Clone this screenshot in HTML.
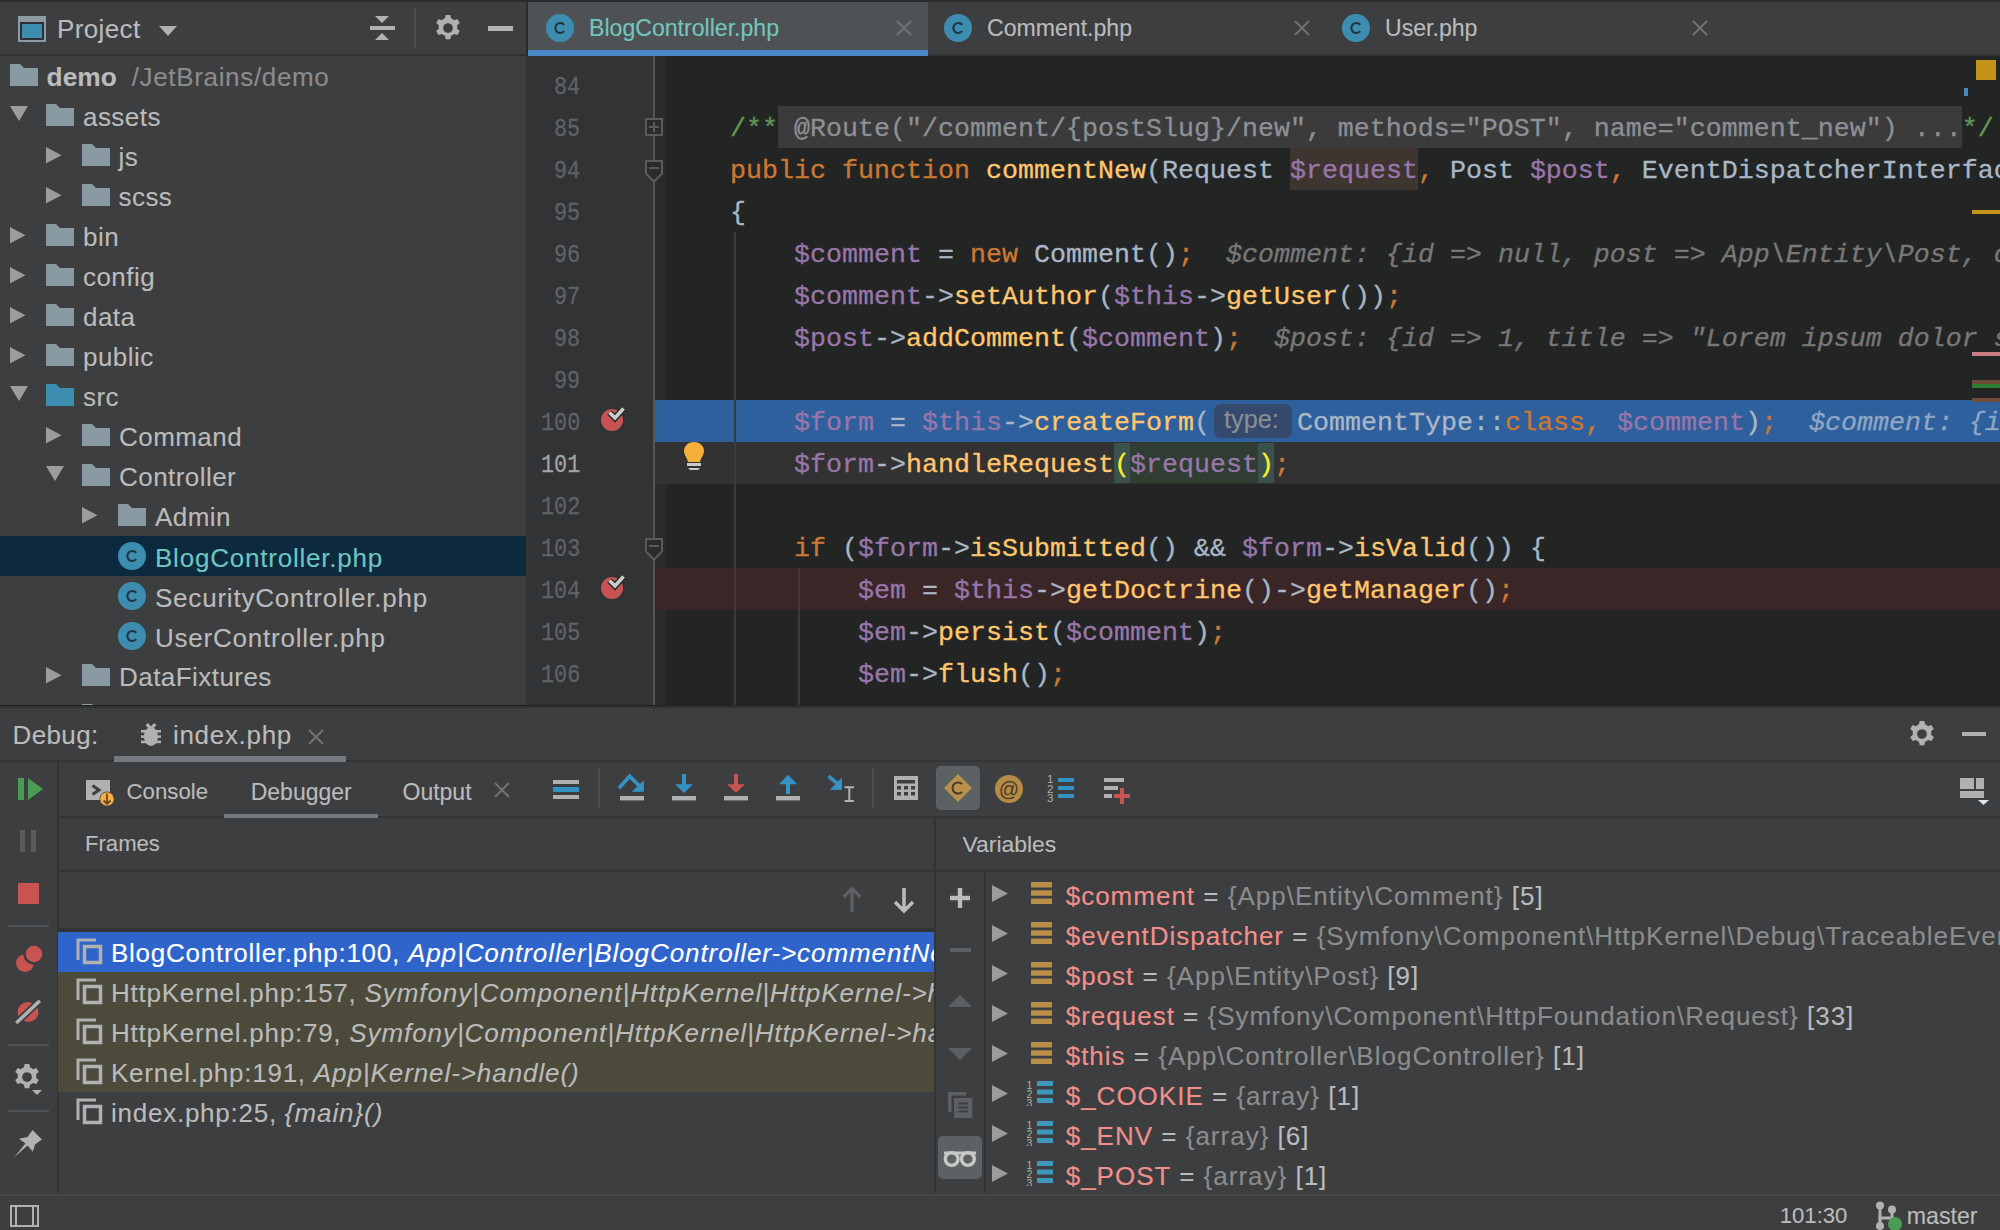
<!DOCTYPE html><html><head><meta charset="utf-8"><style>
html,body{margin:0;padding:0;width:2000px;height:1230px;overflow:hidden;background:#3C3E40}
body{position:relative}
.t{position:absolute;height:0;line-height:0;white-space:pre;-webkit-text-stroke:0.12px currentColor}
</style></head><body>
<div style="position:absolute;left:0px;top:0px;width:2000px;height:1230px;background:#3C3E40;"></div>
<div style="position:absolute;left:0px;top:0px;width:2000px;height:2px;background:#2B2B2B;"></div>
<div style="position:absolute;left:526px;top:0px;width:2px;height:56px;background:#2B2B2B;"></div>
<svg style="position:absolute;left:17px;top:15px" width="30" height="28" viewBox="0 0 30 28"><rect x="1" y="1" width="28" height="26" fill="#8D9BA3"/><rect x="3" y="7" width="24" height="18" fill="#2E3033"/><rect x="5" y="9" width="20" height="14" fill="#3D8DB1"/></svg>
<div class="t" style="left:57px;top:29.49px;font-family:'Liberation Sans', sans-serif;font-size:26px;color:#BBBBBB;letter-spacing:0.37px">Project</div>
<svg style="position:absolute;left:158px;top:25px" width="20" height="12" viewBox="0 0 20 12"><path d="M1 1 L19 1 L10 11 Z" fill="#AFB1B3"/></svg>
<svg style="position:absolute;left:369px;top:15px" width="27" height="27" viewBox="0 0 27 27"><path d="M6 1 H20 L13 8 Z" fill="#AFB1B3"/><rect x="1" y="11" width="25" height="4" fill="#AFB1B3"/><path d="M6 25 H20 L13 18 Z" fill="#AFB1B3"/></svg>
<div style="position:absolute;left:414px;top:8px;width:2px;height:40px;background:#4A4D4F;"></div>
<svg style="position:absolute;left:435px;top:15px" width="26" height="26" viewBox="0 0 26 26"><g transform="translate(13,13) scale(1.05)"><path fill="#AFB1B3" fill-rule="evenodd" d="M-2.2,-12.5 h4.4 l0.7,3.3 a9,9 0 0 1 2.9,1.7 l3.2,-1.1 l2.2,3.8 l-2.5,2.2 a9,9 0 0 1 0,3.3 l2.5,2.2 l-2.2,3.8 l-3.2,-1.1 a9,9 0 0 1 -2.9,1.7 l-0.7,3.3 h-4.4 l-0.7,-3.3 a9,9 0 0 1 -2.9,-1.7 l-3.2,1.1 l-2.2,-3.8 l2.5,-2.2 a9,9 0 0 1 0,-3.3 l-2.5,-2.2 l2.2,-3.8 l3.2,1.1 a9,9 0 0 1 2.9,-1.7 Z M0,-4.6 a4.6,4.6 0 1 0 0.01,0 Z"/></g></svg>
<div style="position:absolute;left:488px;top:26px;width:25px;height:4.5px;background:#AFB1B3;"></div>
<div style="position:absolute;left:0px;top:54px;width:526px;height:2px;background:#2F3133;"></div>
<div style="position:absolute;left:0;top:56px;width:526px;height:650px;overflow:hidden">
<svg style="position:absolute;left:10px;top:8px" width="28" height="22" viewBox="0 0 28 22"><path d="M0 0 H10 L14 4 H28 V22 H0 Z" fill="#8A9AA3"/></svg>
<div class="t" style="left:46.6px;top:20.89px;font-family:'Liberation Sans', sans-serif;font-size:26.3px;color:#BBBBBB;font-weight:bold">demo</div>
<div class="t" style="left:131.7px;top:20.99px;font-family:'Liberation Sans', sans-serif;font-size:26px;color:#8C8C8C;letter-spacing:0.66px">/JetBrains/demo</div>
<div style="position:absolute;left:0px;top:480px;width:526px;height:40px;background:#0D293E;"></div>
<svg style="position:absolute;left:10px;top:50px" width="18" height="15" viewBox="0 0 18 15"><path d="M0 0 H18 L9 15 Z" fill="#9A9C9E"/></svg>
<svg style="position:absolute;left:46px;top:48px" width="28" height="22" viewBox="0 0 28 22"><path d="M0 0 H10 L14 4 H28 V22 H0 Z" fill="#8A9AA3"/></svg>
<div class="t" style="left:83px;top:60.99px;font-family:'Liberation Sans', sans-serif;font-size:26px;color:#BBBBBB;letter-spacing:0.45px">assets</div>
<svg style="position:absolute;left:46px;top:91px" width="16" height="17" viewBox="0 0 16 17"><path d="M0 0 L15.5 8.3 L0 16.6 Z" fill="#9A9C9E"/></svg>
<svg style="position:absolute;left:82px;top:88px" width="28" height="22" viewBox="0 0 28 22"><path d="M0 0 H10 L14 4 H28 V22 H0 Z" fill="#8A9AA3"/></svg>
<div class="t" style="left:118.5px;top:100.99px;font-family:'Liberation Sans', sans-serif;font-size:26px;color:#BBBBBB;letter-spacing:0.45px">js</div>
<svg style="position:absolute;left:46px;top:131px" width="16" height="17" viewBox="0 0 16 17"><path d="M0 0 L15.5 8.3 L0 16.6 Z" fill="#9A9C9E"/></svg>
<svg style="position:absolute;left:82px;top:128px" width="28" height="22" viewBox="0 0 28 22"><path d="M0 0 H10 L14 4 H28 V22 H0 Z" fill="#8A9AA3"/></svg>
<div class="t" style="left:118.5px;top:140.99px;font-family:'Liberation Sans', sans-serif;font-size:26px;color:#BBBBBB;letter-spacing:0.45px">scss</div>
<svg style="position:absolute;left:10px;top:171px" width="16" height="17" viewBox="0 0 16 17"><path d="M0 0 L15.5 8.3 L0 16.6 Z" fill="#9A9C9E"/></svg>
<svg style="position:absolute;left:46px;top:168px" width="28" height="22" viewBox="0 0 28 22"><path d="M0 0 H10 L14 4 H28 V22 H0 Z" fill="#8A9AA3"/></svg>
<div class="t" style="left:83px;top:180.99px;font-family:'Liberation Sans', sans-serif;font-size:26px;color:#BBBBBB;letter-spacing:0.45px">bin</div>
<svg style="position:absolute;left:10px;top:211px" width="16" height="17" viewBox="0 0 16 17"><path d="M0 0 L15.5 8.3 L0 16.6 Z" fill="#9A9C9E"/></svg>
<svg style="position:absolute;left:46px;top:208px" width="28" height="22" viewBox="0 0 28 22"><path d="M0 0 H10 L14 4 H28 V22 H0 Z" fill="#8A9AA3"/></svg>
<div class="t" style="left:83px;top:220.99px;font-family:'Liberation Sans', sans-serif;font-size:26px;color:#BBBBBB;letter-spacing:0.45px">config</div>
<svg style="position:absolute;left:10px;top:251px" width="16" height="17" viewBox="0 0 16 17"><path d="M0 0 L15.5 8.3 L0 16.6 Z" fill="#9A9C9E"/></svg>
<svg style="position:absolute;left:46px;top:248px" width="28" height="22" viewBox="0 0 28 22"><path d="M0 0 H10 L14 4 H28 V22 H0 Z" fill="#8A9AA3"/></svg>
<div class="t" style="left:83px;top:260.99px;font-family:'Liberation Sans', sans-serif;font-size:26px;color:#BBBBBB;letter-spacing:0.45px">data</div>
<svg style="position:absolute;left:10px;top:291px" width="16" height="17" viewBox="0 0 16 17"><path d="M0 0 L15.5 8.3 L0 16.6 Z" fill="#9A9C9E"/></svg>
<svg style="position:absolute;left:46px;top:288px" width="28" height="22" viewBox="0 0 28 22"><path d="M0 0 H10 L14 4 H28 V22 H0 Z" fill="#8A9AA3"/></svg>
<div class="t" style="left:83px;top:300.99px;font-family:'Liberation Sans', sans-serif;font-size:26px;color:#BBBBBB;letter-spacing:0.45px">public</div>
<svg style="position:absolute;left:10px;top:330px" width="18" height="15" viewBox="0 0 18 15"><path d="M0 0 H18 L9 15 Z" fill="#9A9C9E"/></svg>
<svg style="position:absolute;left:46px;top:328px" width="28" height="22" viewBox="0 0 28 22"><path d="M0 0 H10 L14 4 H28 V22 H0 Z" fill="#3D8DB1"/></svg>
<div class="t" style="left:83px;top:340.99px;font-family:'Liberation Sans', sans-serif;font-size:26px;color:#BBBBBB;letter-spacing:0.45px">src</div>
<svg style="position:absolute;left:46px;top:371px" width="16" height="17" viewBox="0 0 16 17"><path d="M0 0 L15.5 8.3 L0 16.6 Z" fill="#9A9C9E"/></svg>
<svg style="position:absolute;left:82px;top:368px" width="28" height="22" viewBox="0 0 28 22"><path d="M0 0 H10 L14 4 H28 V22 H0 Z" fill="#8A9AA3"/></svg>
<div class="t" style="left:119px;top:380.99px;font-family:'Liberation Sans', sans-serif;font-size:26px;color:#BBBBBB;letter-spacing:0.45px">Command</div>
<svg style="position:absolute;left:46px;top:410px" width="18" height="15" viewBox="0 0 18 15"><path d="M0 0 H18 L9 15 Z" fill="#9A9C9E"/></svg>
<svg style="position:absolute;left:82px;top:408px" width="28" height="22" viewBox="0 0 28 22"><path d="M0 0 H10 L14 4 H28 V22 H0 Z" fill="#8A9AA3"/></svg>
<div class="t" style="left:119px;top:420.99px;font-family:'Liberation Sans', sans-serif;font-size:26px;color:#BBBBBB;letter-spacing:0.45px">Controller</div>
<svg style="position:absolute;left:82px;top:451px" width="16" height="17" viewBox="0 0 16 17"><path d="M0 0 L15.5 8.3 L0 16.6 Z" fill="#9A9C9E"/></svg>
<svg style="position:absolute;left:118px;top:448px" width="28" height="22" viewBox="0 0 28 22"><path d="M0 0 H10 L14 4 H28 V22 H0 Z" fill="#8A9AA3"/></svg>
<div class="t" style="left:155px;top:460.99px;font-family:'Liberation Sans', sans-serif;font-size:26px;color:#BBBBBB;letter-spacing:0.45px">Admin</div>
<svg style="position:absolute;left:46px;top:611px" width="16" height="17" viewBox="0 0 16 17"><path d="M0 0 L15.5 8.3 L0 16.6 Z" fill="#9A9C9E"/></svg>
<svg style="position:absolute;left:82px;top:608px" width="28" height="22" viewBox="0 0 28 22"><path d="M0 0 H10 L14 4 H28 V22 H0 Z" fill="#8A9AA3"/></svg>
<div class="t" style="left:119px;top:620.99px;font-family:'Liberation Sans', sans-serif;font-size:26px;color:#BBBBBB;letter-spacing:0.45px">DataFixtures</div>
<svg style="position:absolute;left:46px;top:651px" width="16" height="17" viewBox="0 0 16 17"><path d="M0 0 L15.5 8.3 L0 16.6 Z" fill="#9A9C9E"/></svg>
<svg style="position:absolute;left:82px;top:648px" width="28" height="22" viewBox="0 0 28 22"><path d="M0 0 H10 L14 4 H28 V22 H0 Z" fill="#8A9AA3"/></svg>
<div class="t" style="left:119px;top:660.99px;font-family:'Liberation Sans', sans-serif;font-size:26px;color:#BBBBBB;letter-spacing:0.45px">Entity</div>
<svg style="position:absolute;left:118.0px;top:486.0px" width="28" height="28" viewBox="0 0 28 28"><circle cx="14.0" cy="14.0" r="14.0" fill="#3D8DB1"/><path d="M18.2 10.8 A5 5 0 1 0 18.2 17.2" stroke="#1E3440" stroke-width="2.1" fill="none"/></svg>
<div class="t" style="left:155px;top:501.99px;font-family:'Liberation Sans', sans-serif;font-size:26px;color:#6FC4C0;letter-spacing:0.78px">BlogController.php</div>
<svg style="position:absolute;left:118.0px;top:526.0px" width="28" height="28" viewBox="0 0 28 28"><circle cx="14.0" cy="14.0" r="14.0" fill="#3D8DB1"/><path d="M18.2 10.8 A5 5 0 1 0 18.2 17.2" stroke="#1E3440" stroke-width="2.1" fill="none"/></svg>
<div class="t" style="left:155px;top:541.99px;font-family:'Liberation Sans', sans-serif;font-size:26px;color:#BBBBBB;letter-spacing:0.78px">SecurityController.php</div>
<svg style="position:absolute;left:118.0px;top:566.0px" width="28" height="28" viewBox="0 0 28 28"><circle cx="14.0" cy="14.0" r="14.0" fill="#3D8DB1"/><path d="M18.2 10.8 A5 5 0 1 0 18.2 17.2" stroke="#1E3440" stroke-width="2.1" fill="none"/></svg>
<div class="t" style="left:155px;top:581.99px;font-family:'Liberation Sans', sans-serif;font-size:26px;color:#BBBBBB;letter-spacing:0.78px">UserController.php</div>
</div>
<div style="position:absolute;left:528px;top:2px;width:400px;height:48px;background:#4E5254;"></div>
<div style="position:absolute;left:528px;top:50px;width:400px;height:6px;background:#4A88C7;"></div>
<div style="position:absolute;left:928px;top:54px;width:1072px;height:2px;background:#323234;"></div>
<svg style="position:absolute;left:546.0px;top:14.0px" width="28" height="28" viewBox="0 0 28 28"><circle cx="14.0" cy="14.0" r="14.0" fill="#3D8DB1"/><path d="M18.2 10.8 A5 5 0 1 0 18.2 17.2" stroke="#1E3440" stroke-width="2.1" fill="none"/></svg>
<div class="t" style="left:589px;top:28.00px;font-family:'Liberation Sans', sans-serif;font-size:23.1px;color:#73C6BE;">BlogController.php</div>
<svg style="position:absolute;left:896px;top:20px" width="16" height="16" viewBox="0 0 16 16"><path d="M1 1 L15 15 M15 1 L1 15" stroke="#707274" stroke-width="2"/></svg>
<svg style="position:absolute;left:944.0px;top:14.0px" width="28" height="28" viewBox="0 0 28 28"><circle cx="14.0" cy="14.0" r="14.0" fill="#3D8DB1"/><path d="M18.2 10.8 A5 5 0 1 0 18.2 17.2" stroke="#1E3440" stroke-width="2.1" fill="none"/></svg>
<div class="t" style="left:987px;top:28.00px;font-family:'Liberation Sans', sans-serif;font-size:23.1px;color:#BBBBBB;">Comment.php</div>
<svg style="position:absolute;left:1294px;top:20px" width="16" height="16" viewBox="0 0 16 16"><path d="M1 1 L15 15 M15 1 L1 15" stroke="#707274" stroke-width="2"/></svg>
<svg style="position:absolute;left:1342.0px;top:14.0px" width="28" height="28" viewBox="0 0 28 28"><circle cx="14.0" cy="14.0" r="14.0" fill="#3D8DB1"/><path d="M18.2 10.8 A5 5 0 1 0 18.2 17.2" stroke="#1E3440" stroke-width="2.1" fill="none"/></svg>
<div class="t" style="left:1385px;top:28.00px;font-family:'Liberation Sans', sans-serif;font-size:23.1px;color:#BBBBBB;">User.php</div>
<svg style="position:absolute;left:1692px;top:20px" width="16" height="16" viewBox="0 0 16 16"><path d="M1 1 L15 15 M15 1 L1 15" stroke="#707274" stroke-width="2"/></svg>
<div style="position:absolute;left:528px;top:56px;width:1472px;height:650px;background:#232525;"></div>
<div style="position:absolute;left:526px;top:56px;width:127px;height:650px;background:#313335;"></div>
<div style="position:absolute;left:653px;top:56px;width:2px;height:650px;background:#555555;"></div>
<div style="position:absolute;left:655px;top:56px;width:11px;height:650px;background:#2B2B2B;"></div>
<div style="position:absolute;left:655px;top:400px;width:1345px;height:42px;background:#2E609D;"></div>
<div style="position:absolute;left:655px;top:442px;width:1345px;height:42px;background:#323232;"></div>
<div style="position:absolute;left:655px;top:568px;width:1345px;height:42px;background:#3A2627;"></div>
<div style="position:absolute;left:734px;top:232px;width:2px;height:474px;background:#3B3B3B;"></div>
<div style="position:absolute;left:798px;top:568px;width:2px;height:138px;background:#3B3B3B;"></div>
<div class="t" style="left:553.86px;top:87.08px;font-family:'Liberation Mono', monospace;font-size:26px;-webkit-text-stroke:0.3px currentColor;color:#606366;transform:scaleX(0.838);transform-origin:0 0">84</div>
<div class="t" style="left:553.86px;top:129.08px;font-family:'Liberation Mono', monospace;font-size:26px;-webkit-text-stroke:0.3px currentColor;color:#606366;transform:scaleX(0.838);transform-origin:0 0">85</div>
<div class="t" style="left:553.86px;top:171.08px;font-family:'Liberation Mono', monospace;font-size:26px;-webkit-text-stroke:0.3px currentColor;color:#606366;transform:scaleX(0.838);transform-origin:0 0">94</div>
<div class="t" style="left:553.86px;top:213.08px;font-family:'Liberation Mono', monospace;font-size:26px;-webkit-text-stroke:0.3px currentColor;color:#606366;transform:scaleX(0.838);transform-origin:0 0">95</div>
<div class="t" style="left:553.86px;top:255.08px;font-family:'Liberation Mono', monospace;font-size:26px;-webkit-text-stroke:0.3px currentColor;color:#606366;transform:scaleX(0.838);transform-origin:0 0">96</div>
<div class="t" style="left:553.86px;top:297.08px;font-family:'Liberation Mono', monospace;font-size:26px;-webkit-text-stroke:0.3px currentColor;color:#606366;transform:scaleX(0.838);transform-origin:0 0">97</div>
<div class="t" style="left:553.86px;top:339.08px;font-family:'Liberation Mono', monospace;font-size:26px;-webkit-text-stroke:0.3px currentColor;color:#606366;transform:scaleX(0.838);transform-origin:0 0">98</div>
<div class="t" style="left:553.86px;top:381.08px;font-family:'Liberation Mono', monospace;font-size:26px;-webkit-text-stroke:0.3px currentColor;color:#606366;transform:scaleX(0.838);transform-origin:0 0">99</div>
<div class="t" style="left:540.79px;top:423.08px;font-family:'Liberation Mono', monospace;font-size:26px;-webkit-text-stroke:0.3px currentColor;color:#606366;transform:scaleX(0.838);transform-origin:0 0">100</div>
<div class="t" style="left:540.79px;top:465.08px;font-family:'Liberation Mono', monospace;font-size:26px;-webkit-text-stroke:0.3px currentColor;color:#A4A3A3;transform:scaleX(0.838);transform-origin:0 0">101</div>
<div class="t" style="left:540.79px;top:507.08px;font-family:'Liberation Mono', monospace;font-size:26px;-webkit-text-stroke:0.3px currentColor;color:#606366;transform:scaleX(0.838);transform-origin:0 0">102</div>
<div class="t" style="left:540.79px;top:549.08px;font-family:'Liberation Mono', monospace;font-size:26px;-webkit-text-stroke:0.3px currentColor;color:#606366;transform:scaleX(0.838);transform-origin:0 0">103</div>
<div class="t" style="left:540.79px;top:591.08px;font-family:'Liberation Mono', monospace;font-size:26px;-webkit-text-stroke:0.3px currentColor;color:#606366;transform:scaleX(0.838);transform-origin:0 0">104</div>
<div class="t" style="left:540.79px;top:633.08px;font-family:'Liberation Mono', monospace;font-size:26px;-webkit-text-stroke:0.3px currentColor;color:#606366;transform:scaleX(0.838);transform-origin:0 0">105</div>
<div class="t" style="left:540.79px;top:675.08px;font-family:'Liberation Mono', monospace;font-size:26px;-webkit-text-stroke:0.3px currentColor;color:#606366;transform:scaleX(0.838);transform-origin:0 0">106</div>
<div style="position:absolute;left:778px;top:106px;width:1184px;height:42px;background:#3B3B3B;"></div>
<div class="t" style="left:730.0px;top:128.90px;font-family:'Liberation Mono', monospace;font-size:26.67px;-webkit-text-stroke:0.3px currentColor"><span style="color:#629755;">/**</span><span style="color:#8C9096;"> @Route(&quot;/comment/{postSlug}/new&quot;, methods=&quot;POST&quot;, name=&quot;comment_new&quot;) ...</span><span style="color:#629755;">*/</span></div>
<div style="position:absolute;left:1290px;top:148px;width:128px;height:42px;background:#3F3530;"></div>
<div class="t" style="left:730.0px;top:170.90px;font-family:'Liberation Mono', monospace;font-size:26.67px;-webkit-text-stroke:0.3px currentColor"><span style="color:#CC7832;">public</span><span style="color:#A9B7C6;"> </span><span style="color:#CC7832;">function</span><span style="color:#A9B7C6;"> </span><span style="color:#FFC66D;">commentNew</span><span style="color:#A9B7C6;">(Request </span><span style="color:#9876AA;">$request</span><span style="color:#CC7832;">,</span><span style="color:#A9B7C6;"> Post </span><span style="color:#9876AA;">$post</span><span style="color:#CC7832;">,</span><span style="color:#A9B7C6;"> EventDispatcherInterface $eventDispatcher</span></div>
<div class="t" style="left:730.0px;top:212.90px;font-family:'Liberation Mono', monospace;font-size:26.67px;-webkit-text-stroke:0.3px currentColor"><span style="color:#A9B7C6;">{</span></div>
<div class="t" style="left:794.0px;top:254.90px;font-family:'Liberation Mono', monospace;font-size:26.67px;-webkit-text-stroke:0.3px currentColor"><span style="color:#9876AA;">$comment</span><span style="color:#A9B7C6;"> = </span><span style="color:#CC7832;">new</span><span style="color:#A9B7C6;"> Comment()</span><span style="color:#CC7832;">;</span><span style="color:#787878;font-style:italic">  $comment: {id =&gt; null, post =&gt; App\Entity\Post, content =&gt; null}</span></div>
<div class="t" style="left:794.0px;top:296.90px;font-family:'Liberation Mono', monospace;font-size:26.67px;-webkit-text-stroke:0.3px currentColor"><span style="color:#9876AA;">$comment</span><span style="color:#A9B7C6;">-&gt;</span><span style="color:#FFC66D;">setAuthor</span><span style="color:#A9B7C6;">(</span><span style="color:#9876AA;">$this</span><span style="color:#A9B7C6;">-&gt;</span><span style="color:#FFC66D;">getUser</span><span style="color:#A9B7C6;">())</span><span style="color:#CC7832;">;</span></div>
<div class="t" style="left:794.0px;top:338.90px;font-family:'Liberation Mono', monospace;font-size:26.67px;-webkit-text-stroke:0.3px currentColor"><span style="color:#9876AA;">$post</span><span style="color:#A9B7C6;">-&gt;</span><span style="color:#FFC66D;">addComment</span><span style="color:#A9B7C6;">(</span><span style="color:#9876AA;">$comment</span><span style="color:#A9B7C6;">)</span><span style="color:#CC7832;">;</span><span style="color:#787878;font-style:italic">  $post: {id =&gt; 1, title =&gt; &quot;Lorem ipsum dolor sit amet&quot;}</span></div>
<div class="t" style="left:794.0px;top:422.90px;font-family:'Liberation Mono', monospace;font-size:26.67px;-webkit-text-stroke:0.3px currentColor"><span style="color:#9876AA;">$form</span><span style="color:#A9B7C6;"> = </span><span style="color:#9876AA;">$this</span><span style="color:#A9B7C6;">-&gt;</span><span style="color:#FFC66D;">createForm</span><span style="color:#A9B7C6;">(</span></div>
<div style="position:absolute;left:1214px;top:404px;width:78px;height:34px;background:#34496B;border-radius:7px"></div>
<div class="t" style="left:1224px;top:419.23px;font-family:'Liberation Sans', sans-serif;font-size:25.3px;color:#8A8F96;">type:</div>
<div class="t" style="left:1297px;top:422.90px;font-family:'Liberation Mono', monospace;font-size:26.67px;-webkit-text-stroke:0.3px currentColor"><span style="color:#A9B7C6">CommentType::</span><span style="color:#CC7832">class</span><span style="color:#CC7832">,</span><span style="color:#A9B7C6"> </span><span style="color:#9876AA">$comment</span><span style="color:#A9B7C6">)</span><span style="color:#CC7832">;</span><span style="color:#8FA6C4;font-style:italic">  $comment: {id => null}</span></div>
<div style="position:absolute;left:1114px;top:443px;width:160px;height:40px;background:#2F3D33;"></div>
<div style="position:absolute;left:1114px;top:443px;width:16px;height:40px;background:#3B514D;"></div>
<div style="position:absolute;left:1258px;top:443px;width:16px;height:40px;background:#3B514D;"></div>
<div class="t" style="left:794.0px;top:464.90px;font-family:'Liberation Mono', monospace;font-size:26.67px;-webkit-text-stroke:0.3px currentColor"><span style="color:#9876AA;">$form</span><span style="color:#A9B7C6;">-&gt;</span><span style="color:#FFC66D;">handleRequest</span><span style="color:#FFEF28;">(</span><span style="color:#9876AA;">$request</span><span style="color:#FFEF28;">)</span><span style="color:#CC7832;">;</span></div>
<div class="t" style="left:794.0px;top:548.90px;font-family:'Liberation Mono', monospace;font-size:26.67px;-webkit-text-stroke:0.3px currentColor"><span style="color:#CC7832;">if</span><span style="color:#A9B7C6;"> (</span><span style="color:#9876AA;">$form</span><span style="color:#A9B7C6;">-&gt;</span><span style="color:#FFC66D;">isSubmitted</span><span style="color:#A9B7C6;">() &amp;&amp; </span><span style="color:#9876AA;">$form</span><span style="color:#A9B7C6;">-&gt;</span><span style="color:#FFC66D;">isValid</span><span style="color:#A9B7C6;">()) {</span></div>
<div class="t" style="left:858.0px;top:590.90px;font-family:'Liberation Mono', monospace;font-size:26.67px;-webkit-text-stroke:0.3px currentColor"><span style="color:#9876AA;">$em</span><span style="color:#A9B7C6;"> = </span><span style="color:#9876AA;">$this</span><span style="color:#A9B7C6;">-&gt;</span><span style="color:#FFC66D;">getDoctrine</span><span style="color:#A9B7C6;">()-&gt;</span><span style="color:#FFC66D;">getManager</span><span style="color:#A9B7C6;">()</span><span style="color:#CC7832;">;</span></div>
<div class="t" style="left:858.0px;top:632.90px;font-family:'Liberation Mono', monospace;font-size:26.67px;-webkit-text-stroke:0.3px currentColor"><span style="color:#9876AA;">$em</span><span style="color:#A9B7C6;">-&gt;</span><span style="color:#FFC66D;">persist</span><span style="color:#A9B7C6;">(</span><span style="color:#9876AA;">$comment</span><span style="color:#A9B7C6;">)</span><span style="color:#CC7832;">;</span></div>
<div class="t" style="left:858.0px;top:674.90px;font-family:'Liberation Mono', monospace;font-size:26.67px;-webkit-text-stroke:0.3px currentColor"><span style="color:#9876AA;">$em</span><span style="color:#A9B7C6;">-&gt;</span><span style="color:#FFC66D;">flush</span><span style="color:#A9B7C6;">()</span><span style="color:#CC7832;">;</span></div>
<svg style="position:absolute;left:599px;top:404px" width="32" height="30" viewBox="0 0 32 30"><circle cx="13" cy="16" r="11" fill="#C75450"/><path d="M10.5 8.5 L16 14 L24.5 4.5" stroke="#2B2B2B" stroke-width="6.5" fill="none"/><path d="M10.5 8.5 L16 14 L24.5 4.5" stroke="#CACACA" stroke-width="3.6" fill="none"/></svg>
<svg style="position:absolute;left:599px;top:572px" width="32" height="30" viewBox="0 0 32 30"><circle cx="13" cy="16" r="11" fill="#C75450"/><path d="M10.5 8.5 L16 14 L24.5 4.5" stroke="#2B2B2B" stroke-width="6.5" fill="none"/><path d="M10.5 8.5 L16 14 L24.5 4.5" stroke="#CACACA" stroke-width="3.6" fill="none"/></svg>
<svg style="position:absolute;left:682px;top:440px" width="24" height="32" viewBox="0 0 24 32"><path d="M12 2 C6 2 2 6 2 11 C2 15 5 17 6 22 H18 C19 17 22 15 22 11 C22 6 18 2 12 2 Z" fill="#F4AF3D"/><rect x="5" y="23" width="14" height="3" fill="#CACACA"/><path d="M6 28 H18 L16 30 H8 Z" fill="#CACACA"/></svg>
<svg style="position:absolute;left:644px;top:118px" width="20" height="20" viewBox="0 0 20 20"><rect x="2" y="1" width="16" height="16" fill="#2B2B2B" stroke="#5A5A5A" stroke-width="2"/><path d="M5 9 H15 M10 4 V14" stroke="#5A5A5A" stroke-width="2"/></svg>
<svg style="position:absolute;left:644px;top:160px" width="20" height="24" viewBox="0 0 20 24"><path d="M2 1 H18 V13.5 L10 21.5 L2 13.5 Z" fill="#2B2B2B" stroke="#5A5A5A" stroke-width="2"/><path d="M5 8 H15" stroke="#5A5A5A" stroke-width="2"/></svg>
<svg style="position:absolute;left:644px;top:538px" width="20" height="24" viewBox="0 0 20 24"><path d="M2 1 H18 V13.5 L10 21.5 L2 13.5 Z" fill="#2B2B2B" stroke="#5A5A5A" stroke-width="2"/><path d="M5 8 H15" stroke="#5A5A5A" stroke-width="2"/></svg>
<div style="position:absolute;left:1976px;top:60px;width:20px;height:20px;background:#C39319;"></div>
<div style="position:absolute;left:1964px;top:88px;width:4px;height:8px;background:#4A86C0;"></div>
<div style="position:absolute;left:1972px;top:210px;width:28px;height:4px;background:#C39319;"></div>
<div style="position:absolute;left:1972px;top:352px;width:28px;height:4px;background:#C97C83;"></div>
<div style="position:absolute;left:1972px;top:380px;width:28px;height:4px;background:#6E4B3A;"></div>
<div style="position:absolute;left:1972px;top:384px;width:28px;height:4px;background:#2E7D32;"></div>
<div style="position:absolute;left:1972px;top:398px;width:28px;height:4px;background:#6E4B3A;"></div>
<div style="position:absolute;left:0px;top:705px;width:2000px;height:1px;background:#212121;"></div>
<div style="position:absolute;left:0px;top:706px;width:2000px;height:2px;background:#323232;"></div>
<div class="t" style="left:12.6px;top:734.99px;font-family:'Liberation Sans', sans-serif;font-size:26px;color:#BBBBBB;letter-spacing:0.36px">Debug:</div>
<svg style="position:absolute;left:138px;top:720px" width="26" height="28" viewBox="0 0 26 28"><g fill="#AFB1B3"><ellipse cx="13" cy="16.5" rx="7" ry="9.5"/><path d="M7.5 5 L10 3 L13 6.5 L16 3 L18.5 5 L15 9 H11 Z"/><rect x="3" y="10" width="5" height="2.6"/><rect x="18" y="10" width="5" height="2.6"/><rect x="3" y="15.3" width="5" height="2.6"/><rect x="18" y="15.3" width="5" height="2.6"/><rect x="3" y="20.6" width="5" height="2.6"/><rect x="18" y="20.6" width="5" height="2.6"/></g></svg>
<div class="t" style="left:173px;top:734.99px;font-family:'Liberation Sans', sans-serif;font-size:26px;color:#BBBBBB;letter-spacing:0.69px">index.php</div>
<svg style="position:absolute;left:308px;top:729px" width="16" height="16" viewBox="0 0 16 16"><path d="M1 1 L15 15 M15 1 L1 15" stroke="#707274" stroke-width="2"/></svg>
<div style="position:absolute;left:0px;top:760px;width:2000px;height:2px;background:#323436;"></div>
<div style="position:absolute;left:114px;top:756px;width:232px;height:6px;background:#747A80;"></div>
<svg style="position:absolute;left:1908px;top:720px" width="28" height="28" viewBox="0 0 28 28"><g transform="translate(14,14) scale(1.05)"><path fill="#AFB1B3" fill-rule="evenodd" d="M-2.2,-12.5 h4.4 l0.7,3.3 a9,9 0 0 1 2.9,1.7 l3.2,-1.1 l2.2,3.8 l-2.5,2.2 a9,9 0 0 1 0,3.3 l2.5,2.2 l-2.2,3.8 l-3.2,-1.1 a9,9 0 0 1 -2.9,1.7 l-0.7,3.3 h-4.4 l-0.7,-3.3 a9,9 0 0 1 -2.9,-1.7 l-3.2,1.1 l-2.2,-3.8 l2.5,-2.2 a9,9 0 0 1 0,-3.3 l-2.5,-2.2 l2.2,-3.8 l3.2,1.1 a9,9 0 0 1 2.9,-1.7 Z M0,-4.6 a4.6,4.6 0 1 0 0.01,0 Z"/></g></svg>
<div style="position:absolute;left:1962px;top:732px;width:24px;height:4px;background:#AFB1B3;"></div>
<div style="position:absolute;left:57px;top:762px;width:2px;height:431px;background:#323436;"></div>
<svg style="position:absolute;left:16px;top:776px" width="30" height="26" viewBox="0 0 30 26"><rect x="2" y="2" width="6" height="22" fill="#499C54"/><path d="M12 2 L27 13 L12 24 Z" fill="#499C54"/></svg>
<svg style="position:absolute;left:18px;top:828px" width="20" height="26" viewBox="0 0 20 26"><rect x="2" y="2" width="5" height="22" fill="#595B5D"/><rect x="13" y="2" width="5" height="22" fill="#595B5D"/></svg>
<div style="position:absolute;left:18px;top:883px;width:21px;height:21px;background:#C75450;"></div>
<div style="position:absolute;left:8px;top:925px;width:41px;height:2px;background:#505355;"></div>
<svg style="position:absolute;left:14px;top:943px" width="32" height="32" viewBox="0 0 32 32"><circle cx="11" cy="20" r="9" fill="#C75450"/><circle cx="20" cy="11" r="9.5" fill="#C75450" stroke="#3C3E40" stroke-width="2.5"/></svg>
<svg style="position:absolute;left:8px;top:990px" width="40" height="40" viewBox="0 0 40 40"><ellipse cx="20" cy="22" rx="10.5" ry="10" fill="#C75450"/><path d="M8.3 33 L31.8 10.8" stroke="#3C3E40" stroke-width="7"/><path d="M8.3 33 L31.8 10.8" stroke="#AFB1B3" stroke-width="3.5"/></svg>
<div style="position:absolute;left:8px;top:1044px;width:41px;height:2px;background:#505355;"></div>
<svg style="position:absolute;left:14px;top:1064px" width="30" height="34" viewBox="0 0 30 34"><g transform="translate(13,13) scale(1.05)"><path fill="#AFB1B3" fill-rule="evenodd" d="M-2.2,-12.5 h4.4 l0.7,3.3 a9,9 0 0 1 2.9,1.7 l3.2,-1.1 l2.2,3.8 l-2.5,2.2 a9,9 0 0 1 0,3.3 l2.5,2.2 l-2.2,3.8 l-3.2,-1.1 a9,9 0 0 1 -2.9,1.7 l-0.7,3.3 h-4.4 l-0.7,-3.3 a9,9 0 0 1 -2.9,-1.7 l-3.2,1.1 l-2.2,-3.8 l2.5,-2.2 a9,9 0 0 1 0,-3.3 l-2.5,-2.2 l2.2,-3.8 l3.2,1.1 a9,9 0 0 1 2.9,-1.7 Z M0,-4.6 a4.6,4.6 0 1 0 0.01,0 Z"/></g><path d="M18 26 H28 L23 31 Z" fill="#AFB1B3"/></svg>
<div style="position:absolute;left:8px;top:1110px;width:41px;height:2px;background:#505355;"></div>
<svg style="position:absolute;left:8px;top:1120px" width="40" height="42" viewBox="0 0 40 42"><path d="M11 18.7 L19.5 17 L24.6 10 L33.9 19.4 L27 24.5 L24.9 31.8 L19.5 25.5 L5.5 38 L17.5 23.5 Z" fill="#AFB1B3"/></svg>
<svg style="position:absolute;left:84px;top:776px" width="34" height="34" viewBox="0 0 34 34"><rect x="2" y="4" width="24" height="20" fill="#AFB1B3"/><path d="M8.5 9.5 L15 14 L8.5 18.5" stroke="#3C3E40" stroke-width="3" fill="none"/><circle cx="23" cy="23" r="7.5" fill="#3C3E40"/><circle cx="23" cy="23" r="6.8" fill="#F4AF3D"/><path d="M23 17.5 V28 M19.5 24.5 L23 28 L26.5 24.5" stroke="#6B4A2A" stroke-width="1.8" fill="none"/></svg>
<div class="t" style="left:126.6px;top:792.31px;font-family:'Liberation Sans', sans-serif;font-size:22.2px;color:#BBBBBB;">Console</div>
<div class="t" style="left:250.7px;top:792.03px;font-family:'Liberation Sans', sans-serif;font-size:23.0px;color:#BBBBBB;">Debugger</div>
<div class="t" style="left:402.5px;top:792.03px;font-family:'Liberation Sans', sans-serif;font-size:23.0px;color:#BBBBBB;">Output</div>
<svg style="position:absolute;left:494px;top:782px" width="16" height="16" viewBox="0 0 16 16"><path d="M1 1 L15 15 M15 1 L1 15" stroke="#707274" stroke-width="2"/></svg>
<div style="position:absolute;left:58px;top:816px;width:1942px;height:2px;background:#323436;"></div>
<div style="position:absolute;left:224px;top:814px;width:154px;height:4px;background:#747A80;"></div>
<svg style="position:absolute;left:552px;top:776px" width="30" height="26" viewBox="0 0 30 26"><rect x="1" y="4" width="26" height="4" fill="#AFB1B3"/><rect x="1" y="11" width="26" height="5" fill="#3592C4"/><rect x="1" y="19" width="26" height="4" fill="#AFB1B3"/></svg>
<div style="position:absolute;left:598px;top:768px;width:2px;height:40px;background:#4A4D4F;"></div>
<svg style="position:absolute;left:616px;top:772px" width="32" height="32" viewBox="0 0 32 32"><path d="M2.9 16.3 L13.7 4.2 L23.2 13.6" stroke="#3592C4" stroke-width="3.6" fill="none"/><path d="M15.8 19.7 H27.9 V8.2 Z" fill="#3592C4"/><rect x="4" y="24" width="24" height="4.4" fill="#AFB1B3"/></svg>
<svg style="position:absolute;left:668px;top:772px" width="32" height="32" viewBox="0 0 32 32"><rect x="14" y="2" width="4" height="11" fill="#3592C4"/><path d="M7 12.3 H25 L16 21 Z" fill="#3592C4"/><rect x="4" y="24" width="24" height="4.4" fill="#AFB1B3"/></svg>
<svg style="position:absolute;left:720px;top:772px" width="32" height="32" viewBox="0 0 32 32"><rect x="14" y="2" width="4" height="11" fill="#C75450"/><path d="M7 12.3 H25 L16 21 Z" fill="#C75450"/><rect x="4" y="24" width="24" height="4.4" fill="#AFB1B3"/></svg>
<svg style="position:absolute;left:772px;top:772px" width="32" height="32" viewBox="0 0 32 32"><rect x="14" y="12" width="4" height="10" fill="#3592C4"/><path d="M7 12.3 H25.3 L16.1 2.8 Z" fill="#3592C4"/><rect x="4" y="24" width="24" height="4.4" fill="#AFB1B3"/></svg>
<svg style="position:absolute;left:824px;top:772px" width="34" height="34" viewBox="0 0 34 34"><path d="M4.4 4.2 L14 12" stroke="#3592C4" stroke-width="3.6"/><path d="M5.7 18 L17.9 17.7 V5.5 Z" fill="#3592C4"/><path d="M20.6 15.2 H30 M20.6 28.9 H30 M25.3 15 V29" stroke="#AFB1B3" stroke-width="2"/></svg>
<div style="position:absolute;left:872px;top:768px;width:2px;height:40px;background:#4A4D4F;"></div>
<svg style="position:absolute;left:892px;top:774px" width="28" height="28" viewBox="0 0 28 28"><rect x="2" y="2" width="24" height="24" fill="#AFB1B3"/><rect x="5" y="6" width="18" height="3.5" fill="#3C3E40"/><rect x="5" y="12" width="4" height="3.5" fill="#3C3E40"/><rect x="12" y="12" width="4" height="3.5" fill="#3C3E40"/><rect x="19" y="12" width="4" height="3.5" fill="#3C3E40"/><rect x="5" y="18" width="4" height="3.5" fill="#3C3E40"/><rect x="12" y="18" width="4" height="3.5" fill="#3C3E40"/><rect x="19" y="18" width="4" height="3.5" fill="#3C3E40"/></svg>
<div style="position:absolute;left:936px;top:766px;width:44px;height:44px;background:#5C6164;border-radius:5px"></div>
<svg style="position:absolute;left:942px;top:772px" width="32" height="32" viewBox="0 0 32 32"><path d="M16 2 L30 16 L16 30 L2 16 Z" fill="#B8904E"/><path d="M20 12 A5.6 5.6 0 1 0 20 20" stroke="#46392A" stroke-width="2" fill="none"/></svg>
<svg style="position:absolute;left:994px;top:774px" width="30" height="30" viewBox="0 0 30 30"><circle cx="15" cy="15" r="14" fill="#B58A45"/><text x="15" y="21.5" text-anchor="middle" font-family="Liberation Sans" font-size="20" fill="#46392A">@</text></svg>
<svg style="position:absolute;left:1044px;top:774px" width="34" height="30" viewBox="0 0 34 30"><text x="3" y="9" font-family="Liberation Sans" font-size="11.5" fill="#AFB1B3">1</text><text x="3" y="18.5" font-family="Liberation Sans" font-size="11.5" fill="#AFB1B3">2</text><text x="3" y="28" font-family="Liberation Sans" font-size="11.5" fill="#AFB1B3">3</text><rect x="14" y="4" width="16" height="4" fill="#3592C4"/><rect x="14" y="12" width="16" height="4" fill="#3592C4"/><rect x="14" y="20" width="16" height="4" fill="#3592C4"/></svg>
<svg style="position:absolute;left:1100px;top:774px" width="34" height="34" viewBox="0 0 34 34"><rect x="4" y="4" width="20" height="4" fill="#AFB1B3"/><rect x="4" y="12" width="14" height="4" fill="#AFB1B3"/><rect x="4" y="20" width="8" height="4" fill="#AFB1B3"/><rect x="14" y="20" width="16" height="4" fill="#C75450"/><rect x="20" y="14" width="4" height="16" fill="#C75450"/></svg>
<svg style="position:absolute;left:1958px;top:776px" width="34" height="32" viewBox="0 0 34 32"><rect x="2" y="2" width="14" height="11" fill="#AFB1B3"/><rect x="18" y="2" width="8" height="11" fill="#AFB1B3"/><rect x="2" y="15" width="24" height="7" fill="#AFB1B3"/><path d="M20 24 H31 L25.5 29 Z" fill="#DDE4F0"/></svg>
<div style="position:absolute;left:934px;top:818px;width:2px;height:375px;background:#323436;"></div>
<div class="t" style="left:85px;top:844.34px;font-family:'Liberation Sans', sans-serif;font-size:22.1px;color:#BBBBBB;">Frames</div>
<div style="position:absolute;left:58px;top:870px;width:876px;height:2px;background:#323436;"></div>
<svg style="position:absolute;left:840px;top:884px" width="24" height="30" viewBox="0 0 24 30"><path d="M12 5 V28 M3.5 13 L12 4.5 L20.5 13" stroke="#5D6063" stroke-width="3.3" fill="none"/></svg>
<svg style="position:absolute;left:891px;top:884px" width="26" height="30" viewBox="0 0 26 30"><path d="M13 4 V26.5 M4 18 L13 27 L22 18" stroke="#BBBBBB" stroke-width="3.5" fill="none"/></svg>
<div style="position:absolute;left:58px;top:928px;width:876px;height:4px;background:#323436;"></div>
<div style="position:absolute;left:58px;top:932px;width:876px;height:261px;overflow:hidden">
<div style="position:absolute;left:0px;top:0px;width:876px;height:40px;background:#2F65CA;"></div>
<svg style="position:absolute;left:18px;top:6px" width="28" height="28" viewBox="0 0 28 28"><path d="M2 22 V2 H20" stroke="#AFB1B3" stroke-width="3" fill="none"/><rect x="8.5" y="8.5" width="16" height="16" stroke="#AFB1B3" stroke-width="3.5" fill="none"/></svg>
<div class="t" style="left:53px;top:20.99px;font-family:'Liberation Sans', sans-serif;font-size:26px;letter-spacing:0.75px;color:#FFFFFF">BlogController.php:100, <i style="letter-spacing:0.92px">App|Controller|BlogController-&gt;commentNew()</i></div>
<div style="position:absolute;left:0px;top:40px;width:876px;height:40px;background:#4B4A3B;"></div>
<svg style="position:absolute;left:18px;top:46px" width="28" height="28" viewBox="0 0 28 28"><path d="M2 22 V2 H20" stroke="#AFB1B3" stroke-width="3" fill="none"/><rect x="8.5" y="8.5" width="16" height="16" stroke="#AFB1B3" stroke-width="3.5" fill="none"/></svg>
<div class="t" style="left:53px;top:60.99px;font-family:'Liberation Sans', sans-serif;font-size:26px;letter-spacing:0.75px;color:#BBBBBB">HttpKernel.php:157, <i style="letter-spacing:0.92px">Symfony|Component|HttpKernel|HttpKernel-&gt;handleRaw()</i></div>
<div style="position:absolute;left:0px;top:80px;width:876px;height:40px;background:#4B4A3B;"></div>
<svg style="position:absolute;left:18px;top:86px" width="28" height="28" viewBox="0 0 28 28"><path d="M2 22 V2 H20" stroke="#AFB1B3" stroke-width="3" fill="none"/><rect x="8.5" y="8.5" width="16" height="16" stroke="#AFB1B3" stroke-width="3.5" fill="none"/></svg>
<div class="t" style="left:53px;top:100.99px;font-family:'Liberation Sans', sans-serif;font-size:26px;letter-spacing:0.75px;color:#BBBBBB">HttpKernel.php:79, <i style="letter-spacing:0.92px">Symfony|Component|HttpKernel|HttpKernel-&gt;handle()</i></div>
<div style="position:absolute;left:0px;top:120px;width:876px;height:40px;background:#4B4A3B;"></div>
<svg style="position:absolute;left:18px;top:126px" width="28" height="28" viewBox="0 0 28 28"><path d="M2 22 V2 H20" stroke="#AFB1B3" stroke-width="3" fill="none"/><rect x="8.5" y="8.5" width="16" height="16" stroke="#AFB1B3" stroke-width="3.5" fill="none"/></svg>
<div class="t" style="left:53px;top:140.99px;font-family:'Liberation Sans', sans-serif;font-size:26px;letter-spacing:0.75px;color:#BBBBBB">Kernel.php:191, <i style="letter-spacing:0.92px">App|Kernel-&gt;handle()</i></div>
<svg style="position:absolute;left:18px;top:166px" width="28" height="28" viewBox="0 0 28 28"><path d="M2 22 V2 H20" stroke="#AFB1B3" stroke-width="3" fill="none"/><rect x="8.5" y="8.5" width="16" height="16" stroke="#AFB1B3" stroke-width="3.5" fill="none"/></svg>
<div class="t" style="left:53px;top:180.99px;font-family:'Liberation Sans', sans-serif;font-size:26px;letter-spacing:0.75px;color:#BBBBBB">index.php:25, <i style="letter-spacing:0.92px">{main}()</i></div>
</div>
<div class="t" style="left:962.5px;top:844.07px;font-family:'Liberation Sans', sans-serif;font-size:22.9px;color:#BBBBBB;">Variables</div>
<div style="position:absolute;left:936px;top:870px;width:1064px;height:2px;background:#323436;"></div>
<div style="position:absolute;left:984px;top:872px;width:2px;height:321px;background:#323436;"></div>
<svg style="position:absolute;left:946px;top:885px" width="28" height="28" viewBox="0 0 28 28"><rect x="4" y="10.8" width="20" height="4.4" fill="#BBBBBB"/><rect x="11.8" y="3" width="4.4" height="20" fill="#BBBBBB"/></svg>
<div style="position:absolute;left:950px;top:948px;width:21px;height:4px;background:#5D6063;"></div>
<svg style="position:absolute;left:946px;top:993px" width="28" height="16" viewBox="0 0 28 16"><path d="M2 14 H26 L14 2 Z" fill="#5D6063"/></svg>
<svg style="position:absolute;left:946px;top:1046px" width="28" height="16" viewBox="0 0 28 16"><path d="M2 2 H26 L14 14 Z" fill="#5D6063"/></svg>
<svg style="position:absolute;left:946px;top:1088px" width="30" height="32" viewBox="0 0 30 32"><rect x="2" y="4" width="18" height="3.6" fill="#5D6063"/><rect x="2" y="4" width="3.6" height="19.8" fill="#5D6063"/><rect x="8" y="10" width="18.3" height="20" fill="#5D6063"/><path d="M12.5 15.5 H22 M12.5 19.5 H22 M12.5 23.5 H22" stroke="#3C3E40" stroke-width="1.8"/></svg>
<div style="position:absolute;left:938px;top:1136px;width:44px;height:43px;background:#5C6164;border-radius:5px"></div>
<svg style="position:absolute;left:942px;top:1148px" width="36" height="22" viewBox="0 0 36 22"><circle cx="9.7" cy="11" r="6.4" stroke="#C8C8C8" stroke-width="3.4" fill="none"/><circle cx="25.9" cy="11" r="6.4" stroke="#C8C8C8" stroke-width="3.4" fill="none"/><path d="M2 5 H34" stroke="#C8C8C8" stroke-width="3"/></svg>
<div style="position:absolute;left:986px;top:872px;width:1014px;height:321px;overflow:hidden">
<svg style="position:absolute;left:6px;top:13.0px" width="17" height="18" viewBox="0 0 17 18"><path d="M0 0 L16 8.5 L0 17 Z" fill="#9A9C9E"/></svg>
<svg style="position:absolute;left:45px;top:9.5px" width="22" height="22" viewBox="0 0 22 22"><g fill="#B88F45"><rect x="0" y="0" width="21" height="5.5"/><rect x="0" y="8.25" width="21" height="5.5"/><rect x="0" y="16.5" width="21" height="5.5"/></g></svg>
<div class="t" style="left:79.70000000000005px;top:23.99px;font-family:'Liberation Sans', sans-serif;font-size:26px;letter-spacing:1.0px;color:#BBBBBB"><span style="color:#F38F8B">$comment</span> = <span style="color:#8C8C8C">{App\Entity\Comment}</span> [5]</div>
<svg style="position:absolute;left:6px;top:53.0px" width="17" height="18" viewBox="0 0 17 18"><path d="M0 0 L16 8.5 L0 17 Z" fill="#9A9C9E"/></svg>
<svg style="position:absolute;left:45px;top:49.5px" width="22" height="22" viewBox="0 0 22 22"><g fill="#B88F45"><rect x="0" y="0" width="21" height="5.5"/><rect x="0" y="8.25" width="21" height="5.5"/><rect x="0" y="16.5" width="21" height="5.5"/></g></svg>
<div class="t" style="left:79.70000000000005px;top:63.99px;font-family:'Liberation Sans', sans-serif;font-size:26px;letter-spacing:1.0px;color:#BBBBBB"><span style="color:#F38F8B">$eventDispatcher</span> = <span style="color:#8C8C8C">{Symfony\Component\HttpKernel\Debug\TraceableEventDispatcher}</span> [9]</div>
<svg style="position:absolute;left:6px;top:93.0px" width="17" height="18" viewBox="0 0 17 18"><path d="M0 0 L16 8.5 L0 17 Z" fill="#9A9C9E"/></svg>
<svg style="position:absolute;left:45px;top:89.5px" width="22" height="22" viewBox="0 0 22 22"><g fill="#B88F45"><rect x="0" y="0" width="21" height="5.5"/><rect x="0" y="8.25" width="21" height="5.5"/><rect x="0" y="16.5" width="21" height="5.5"/></g></svg>
<div class="t" style="left:79.70000000000005px;top:103.99px;font-family:'Liberation Sans', sans-serif;font-size:26px;letter-spacing:1.0px;color:#BBBBBB"><span style="color:#F38F8B">$post</span> = <span style="color:#8C8C8C">{App\Entity\Post}</span> [9]</div>
<svg style="position:absolute;left:6px;top:133.0px" width="17" height="18" viewBox="0 0 17 18"><path d="M0 0 L16 8.5 L0 17 Z" fill="#9A9C9E"/></svg>
<svg style="position:absolute;left:45px;top:129.5px" width="22" height="22" viewBox="0 0 22 22"><g fill="#B88F45"><rect x="0" y="0" width="21" height="5.5"/><rect x="0" y="8.25" width="21" height="5.5"/><rect x="0" y="16.5" width="21" height="5.5"/></g></svg>
<div class="t" style="left:79.70000000000005px;top:143.99px;font-family:'Liberation Sans', sans-serif;font-size:26px;letter-spacing:1.0px;color:#BBBBBB"><span style="color:#F38F8B">$request</span> = <span style="color:#8C8C8C">{Symfony\Component\HttpFoundation\Request}</span> [33]</div>
<svg style="position:absolute;left:6px;top:173.0px" width="17" height="18" viewBox="0 0 17 18"><path d="M0 0 L16 8.5 L0 17 Z" fill="#9A9C9E"/></svg>
<svg style="position:absolute;left:45px;top:169.5px" width="22" height="22" viewBox="0 0 22 22"><g fill="#B88F45"><rect x="0" y="0" width="21" height="5.5"/><rect x="0" y="8.25" width="21" height="5.5"/><rect x="0" y="16.5" width="21" height="5.5"/></g></svg>
<div class="t" style="left:79.70000000000005px;top:183.99px;font-family:'Liberation Sans', sans-serif;font-size:26px;letter-spacing:1.0px;color:#BBBBBB"><span style="color:#F38F8B">$this</span> = <span style="color:#8C8C8C">{App\Controller\BlogController}</span> [1]</div>
<svg style="position:absolute;left:6px;top:213.0px" width="17" height="18" viewBox="0 0 17 18"><path d="M0 0 L16 8.5 L0 17 Z" fill="#9A9C9E"/></svg>
<svg style="position:absolute;left:40px;top:207.5px" width="30" height="26" viewBox="0 0 30 26"><text x="0.5" y="9" font-family="Liberation Sans" font-size="10.5" fill="#AFB1B3">1</text><text x="0.5" y="18" font-family="Liberation Sans" font-size="10.5" fill="#AFB1B3">2</text><text x="0.5" y="27" font-family="Liberation Sans" font-size="10.5" fill="#AFB1B3">3</text><g fill="#3D98BA"><rect x="11" y="1" width="16" height="5"/><rect x="11" y="9.5" width="16" height="5"/><rect x="11" y="18" width="16" height="5"/></g></svg>
<div class="t" style="left:79.70000000000005px;top:223.99px;font-family:'Liberation Sans', sans-serif;font-size:26px;letter-spacing:1.0px;color:#BBBBBB"><span style="color:#F38F8B">$_COOKIE</span> = <span style="color:#8C8C8C">{array}</span> [1]</div>
<svg style="position:absolute;left:6px;top:253.0px" width="17" height="18" viewBox="0 0 17 18"><path d="M0 0 L16 8.5 L0 17 Z" fill="#9A9C9E"/></svg>
<svg style="position:absolute;left:40px;top:247.5px" width="30" height="26" viewBox="0 0 30 26"><text x="0.5" y="9" font-family="Liberation Sans" font-size="10.5" fill="#AFB1B3">1</text><text x="0.5" y="18" font-family="Liberation Sans" font-size="10.5" fill="#AFB1B3">2</text><text x="0.5" y="27" font-family="Liberation Sans" font-size="10.5" fill="#AFB1B3">3</text><g fill="#3D98BA"><rect x="11" y="1" width="16" height="5"/><rect x="11" y="9.5" width="16" height="5"/><rect x="11" y="18" width="16" height="5"/></g></svg>
<div class="t" style="left:79.70000000000005px;top:263.99px;font-family:'Liberation Sans', sans-serif;font-size:26px;letter-spacing:1.0px;color:#BBBBBB"><span style="color:#F38F8B">$_ENV</span> = <span style="color:#8C8C8C">{array}</span> [6]</div>
<svg style="position:absolute;left:6px;top:293.0px" width="17" height="18" viewBox="0 0 17 18"><path d="M0 0 L16 8.5 L0 17 Z" fill="#9A9C9E"/></svg>
<svg style="position:absolute;left:40px;top:287.5px" width="30" height="26" viewBox="0 0 30 26"><text x="0.5" y="9" font-family="Liberation Sans" font-size="10.5" fill="#AFB1B3">1</text><text x="0.5" y="18" font-family="Liberation Sans" font-size="10.5" fill="#AFB1B3">2</text><text x="0.5" y="27" font-family="Liberation Sans" font-size="10.5" fill="#AFB1B3">3</text><g fill="#3D98BA"><rect x="11" y="1" width="16" height="5"/><rect x="11" y="9.5" width="16" height="5"/><rect x="11" y="18" width="16" height="5"/></g></svg>
<div class="t" style="left:79.70000000000005px;top:303.99px;font-family:'Liberation Sans', sans-serif;font-size:26px;letter-spacing:1.0px;color:#BBBBBB"><span style="color:#F38F8B">$_POST</span> = <span style="color:#8C8C8C">{array}</span> [1]</div>
</div>
<div style="position:absolute;left:0px;top:1193px;width:2000px;height:1px;background:#3F3C3F;"></div>
<div style="position:absolute;left:0px;top:1194px;width:2000px;height:1.6px;background:#47474A;"></div>
<svg style="position:absolute;left:8px;top:1203px" width="34" height="26" viewBox="0 0 34 26"><rect x="3" y="3" width="27" height="20" stroke="#AFB1B3" stroke-width="2" fill="none"/><rect x="7" y="3" width="2" height="20" fill="#AFB1B3"/><rect x="24" y="3" width="2" height="20" fill="#AFB1B3"/></svg>
<div class="t" style="left:1779.8px;top:1216.34px;font-family:'Liberation Sans', sans-serif;font-size:22.1px;color:#BBBBBB;">101:30</div>
<svg style="position:absolute;left:1870px;top:1198px" width="36" height="32" viewBox="0 0 36 32"><g fill="#AFB1B3"><circle cx="10" cy="7.5" r="4"/><circle cx="22" cy="11.5" r="4"/><circle cx="10" cy="28" r="4"/><rect x="8.5" y="7.5" width="3" height="20.5"/><rect x="20.5" y="11.5" width="3" height="8"/><rect x="8.5" y="18.5" width="15" height="3"/></g><circle cx="25" cy="26" r="7" fill="#499C54"/></svg>
<div class="t" style="left:1906.7px;top:1215.96px;font-family:'Liberation Sans', sans-serif;font-size:23.2px;color:#BBBBBB;">master</div>
</body></html>
